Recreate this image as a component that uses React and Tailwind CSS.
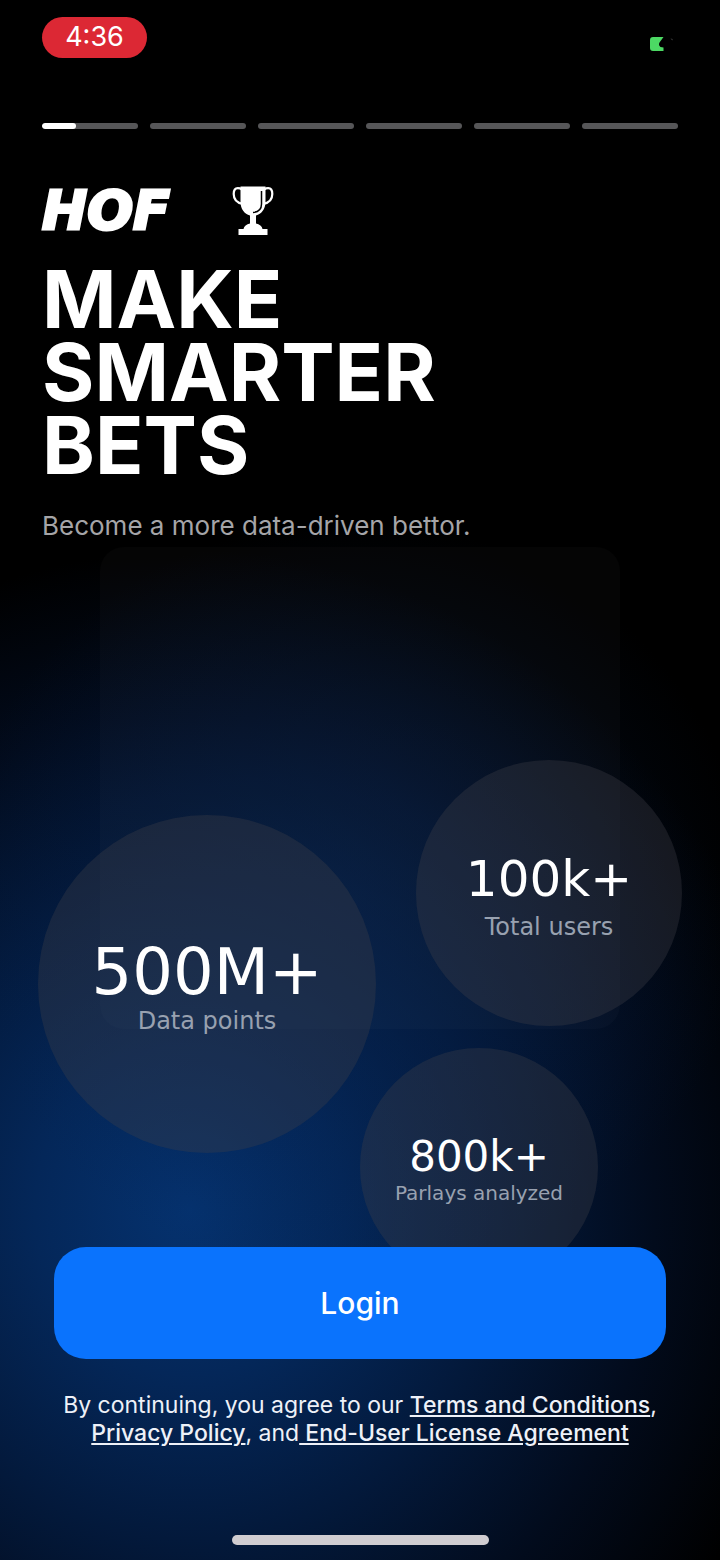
const steps = [35, 0, 0, 0, 0, 0];

const stats = [
  {
    value: '100k+',
    label: 'Total users',
    bubble: 'top-[213px] right-[38px] size-[266px] pt-2',
    valueClass: 'text-[50px] leading-[60px]',
    labelClass: 'text-[24px] leading-[36px]',
  },
  {
    value: '500M+',
    label: 'Data points',
    bubble: 'top-[268px] left-[38px] size-[338px] pt-2',
    valueClass: 'text-[64px] leading-[66px]',
    labelClass: 'text-[24px] leading-[32px]',
  },
  {
    value: '800k+',
    label: 'Parlays analyzed',
    bubble: 'top-[501px] right-[122px] size-[238px] pt-2',
    valueClass: 'text-[42px] leading-[44px]',
    labelClass: 'text-[20px] leading-[28px]',
  },
];

function Battery() {
  return (
    <svg width="24" height="16" viewBox="0 0 24 16" aria-label="Battery">
      <path d="M3 1H13.500L9.500 6.500C8.500 8 9 10 10.500 11L13.500 11.500V15H3C1 15 0 14 0 12V4C0 2 1 1 3 1Z" fill="#4cd964" />
      <path d="M20.500 2.500L22.500 3V4.500Z" fill="#4a4a4a" />
    </svg>
  );
}

function Trophy() {
  return (
    <svg width="42" height="50" viewBox="0 0 42 50" fill="none" aria-hidden="true">
      <path d="M10 3.500C8.500 2.500 7 2.200 5.800 2.200C3 2.200 1.700 4.500 1.700 8C1.700 13 5 17 11 18" stroke="#fff" strokeWidth="2.200" />
      <path d="M32 3.500C33.500 2.500 35 2.200 36.200 2.200C39 2.200 40.300 4.500 40.300 8C40.300 13 37 17 31 18" stroke="#fff" strokeWidth="2.200" />
      <path d="M8.500 0.500H33.500V16C33.500 23 29.500 28 24 29.500V37.500C27.500 38.500 30 40 30.500 43H35.500V49H6.500V43H11.500C12 40 14.500 38.500 18 37.500V29.500C12.500 28 8.500 23 8.500 16Z" fill="#fff" />
      <path d="M29.500 5V18C29.500 23 26.500 26 21 26.500" stroke="#000" strokeWidth="1.500" />
    </svg>
  );
}

function Bubble({ stat }) {
  return (
    <div className={`absolute flex flex-col items-center justify-center rounded-full bg-[#3e4048]/35 font-['DejaVu_Sans',sans-serif] ${stat.bubble}`}>
      <p className={`text-white ${stat.valueClass}`}>{stat.value}</p>
      <p className={`text-[#98a1b0] ${stat.labelClass}`}>{stat.label}</p>
    </div>
  );
}

export default function App() {
  return (
    <div className="flex min-h-screen flex-col overflow-hidden bg-black bg-[radial-gradient(ellipse_400px_380px_at_350px_900px,#06204a80_0%,#06204a50_40%,#06204a00_100%),radial-gradient(ellipse_620px_660px_at_190px_1210px,#05326f_0%,#042759_25%,#03193b_50%,#020b1c_75%,#000000_100%)] font-['Inter','Liberation_Sans',sans-serif] text-white">
      <header className="flex flex-col px-[42px] pt-[17px]">
        <div className="flex items-center justify-between">
          <time className="flex h-[41px] w-[105px] items-center justify-center rounded-full bg-[#dc2834] text-[27px]">
            4:36
          </time>
          <div className="pt-3 pr-1">
            <Battery />
          </div>
        </div>

        <div className="mt-[65px] flex gap-3">
          {steps.map((filled, index) => (
            <div key={index} className="h-[6px] flex-1 overflow-hidden rounded-full bg-[#565658]">
              <div className="h-full rounded-full bg-white" style={{ width: `${filled}%` }} />
            </div>
          ))}
        </div>
      </header>

      <section className="px-[42px] pt-[57px]">
        <div className="flex h-[50px] items-center">
          <span className="w-[190px] font-['DejaVu_Sans',sans-serif] text-[54px] leading-[50px] font-bold italic [-webkit-text-stroke:3px_white]">
            HOF
          </span>
          <Trophy />
        </div>
        <h1 className="mt-[26px] text-[80px] leading-[73px] font-bold">
          MAKE
          <br />
          SMARTER
          <br />
          BETS
        </h1>
        <p className="mt-[28px] text-[26px] leading-[34px] text-[#a5a5a8]">Become a more data-driven bettor.</p>
      </section>

      {/* Stat bubbles float over the faint panel */}
      <section className="relative mt-1 min-h-[699px] flex-1">
        <div className="mx-[100px] h-[482px] rounded-[24px] bg-white/2" />
        {stats.map((stat) => (
          <Bubble key={stat.label} stat={stat} />
        ))}
      </section>

      <footer className="relative flex flex-col items-center px-[54px] pb-[15px]">
        <button type="button" className="h-[112px] w-full rounded-[32px] bg-[#0a73fd] text-[30px] font-medium">
          Login
        </button>
        <p className="mt-[32px] text-center text-[23px] leading-[28px] text-[#eef1f8]">
          By continuing, you agree to our{' '}
          <a href="#terms" className="font-medium underline">Terms and Conditions</a>,
          <br />
          <a href="#privacy" className="font-medium underline">Privacy Policy</a>, and
          <a href="#eula" className="font-medium underline"> End-User License Agreement</a>
        </p>
        <div className="mt-[88px] h-[10px] w-[257px] rounded-full bg-[#d0cdd1]" />
      </footer>
    </div>
  );
}
